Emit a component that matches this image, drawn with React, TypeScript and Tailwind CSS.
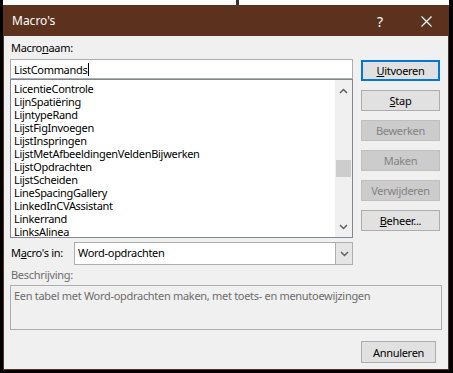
const font = { fontFamily: '"Noto Sans", "Open Sans", sans-serif' };

const macros = [
    'LicentieControle',
    'LijnSpatiëring',
    'LijntypeRand',
    'LijstFigInvoegen',
    'LijstInspringen',
    'LijstMetAfbeeldingenVeldenBijwerken',
    'LijstOpdrachten',
    'LijstScheiden',
    'LineSpacingGallery',
    'LinkedInCVAssistant',
    'Linkerrand',
    'LinksAlinea',
];

function Chevron({ up }: { up?: boolean }) {
    return (
        <svg width="9" height="6" viewBox="0 0 9 6" className="block">
            <path
                d={up ? 'M1 5 L4.5 1.5 L8 5' : 'M1 1 L4.5 4.5 L8 1'}
                fill="none"
                stroke="#606060"
                strokeWidth="1.5"
            />
        </svg>
    );
}

function Btn({ children, disabled, focus }: { children: React.ReactNode; disabled?: boolean; focus?: boolean }) {
    return (
        <div
            className={
                'flex h-[21px] w-[79px] items-center justify-center text-[11px] leading-none ' +
                (focus
                    ? 'border-2 border-[#0078d7] bg-[#e1e1e1] text-black'
                    : disabled
                      ? 'border border-[#bfbfbf] bg-[#cccccc] text-[#838383]'
                      : 'border border-[#adadad] bg-[#e1e1e1] text-black')
            }
        >
            {children}
        </div>
    );
}

export default function App() {
    return (
        <div className="flex h-[373px] w-[453px] flex-col overflow-hidden bg-black" style={font}>
            <div className="ml-[3px] flex h-[5px] w-[446px] shrink-0">
                <div className="h-full w-[233px] bg-white" />
                <div className="h-full w-[3px] bg-[#333]" />
                <div className="h-full flex-1 bg-white" />
            </div>

            <div className="ml-[3px] flex h-[365px] w-[446px] flex-col border border-[#5c321e] bg-[#f0f0f0]">
                {/* title bar */}
                <div className="flex h-[30px] shrink-0 items-center bg-[#5c321e] pl-[8px] text-white">
                    <span className="text-[12px]">Macro's</span>
                    <span className="ml-auto mr-[38px] text-[14px]">?</span>
                    <svg width="11" height="11" viewBox="0 0 11 11" className="mr-[16px]">
                        <path d="M0.5 0.5 L10.5 10.5 M10.5 0.5 L0.5 10.5" stroke="white" strokeWidth="1.2" />
                    </svg>
                </div>

                <div className="flex flex-col px-[6px] text-[11px] tracking-[-0.3px] text-black">
                    <div className="flex gap-[8px]">
                        <div className="flex w-[343px] flex-col">
                            <div className="mt-[4px] h-[16px] pl-[1px] leading-[16px]">
                                Macro<u>n</u>aam:
                            </div>
                            <div className="mt-[3px] flex h-[20px] items-center border border-[#adadad] bg-white pl-[3px] leading-none">
                                ListCommands<span className="ml-px inline-block h-[13px] w-px bg-black" />
                            </div>
                            <div className="flex h-[159px] border border-[#828790] bg-white">
                                <div className="flex-1 pl-[3px] pt-[2px]">
                                    {macros.map((m) => (
                                        <div key={m} className="h-[13px] leading-[13px]">
                                            {m}
                                        </div>
                                    ))}
                                </div>
                                <div className="flex w-[17px] flex-col items-center bg-[#f0f0f0]">
                                    <div className="flex h-[17px] items-center pt-[4px]">
                                        <Chevron up />
                                    </div>
                                    <div className="mt-[63px] h-[17px] w-[15px] bg-[#cdcdcd]" />
                                    <div className="mt-auto flex h-[17px] items-center pb-[4px]">
                                        <Chevron />
                                    </div>
                                </div>
                            </div>
                            <div className="mt-[4px] flex h-[23px] items-center">
                                <div className="w-[64px] pl-[1px]">
                                    M<u>a</u>cro's in:
                                </div>
                                <div className="flex h-[23px] flex-1 border border-[#adadad] bg-white">
                                    <div className="flex flex-1 items-center pl-[3px]">Word-opdrachten</div>
                                    <div className="flex w-[17px] items-center justify-center border-l border-[#adadad] bg-[#e5e5e5]">
                                        <Chevron />
                                    </div>
                                </div>
                            </div>
                        </div>

                        <div className="mt-[24px] flex flex-col gap-[9px]">
                            <Btn focus>
                                <span>
                                    <u>U</u>itvoeren
                                </span>
                            </Btn>
                            <Btn>
                                <span>
                                    <u>S</u>tap
                                </span>
                            </Btn>
                            <Btn disabled>Bewerken</Btn>
                            <Btn disabled>Maken</Btn>
                            <Btn disabled>Verwijderen</Btn>
                            <Btn>
                                <span>
                                    <u>B</u>eheer...
                                </span>
                            </Btn>
                        </div>
                    </div>

                    <div className="mt-[2px] h-[16px] pl-[1px] leading-[16px] text-[#6d6d6d]">Beschrijving:</div>
                    <div className="mt-[2px] h-[45px] w-[432px] border border-[#adadad] bg-[#f0f0f0] pl-[3px] pt-[2px] leading-[16px] text-[#6d6d6d]">
                        Een tabel met Word-opdrachten maken, met toets- en menutoewijzingen
                    </div>

                    <div className="mt-[11px] flex justify-end pr-[6px]">
                        <div className="flex h-[22px] w-[75px] items-center justify-center border border-[#adadad] bg-[#e1e1e1] leading-none">
                            Annuleren
                        </div>
                    </div>
                </div>
            </div>
        </div>
    );
}
